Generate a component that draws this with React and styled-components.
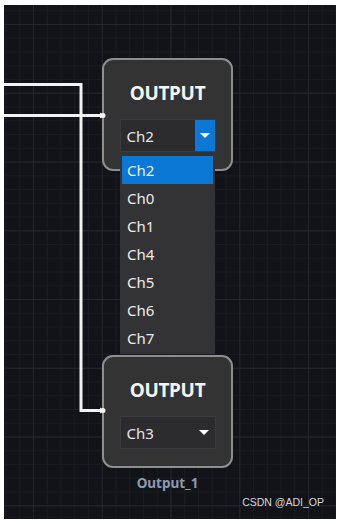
import React from "react";
import styled, { createGlobalStyle } from "styled-components";

const GlobalStyle = createGlobalStyle`
  html, body {
    margin: 0;
    padding: 0;
    background: #ffffff;
  }
  body {
    font-family: "Noto Sans", "Liberation Sans", sans-serif;
  }
`;

const Frame = styled.div`
  width: 340px;
  height: 524px;
  padding: 5px 4px 5px 4px;
  box-sizing: border-box;
`;

const Canvas = styled.div`
  position: relative;
  width: 332px;
  height: 514px;
  overflow: hidden;
  background-color: #121319;
  background-image:
    linear-gradient(to right, #24252c 1px, transparent 1px),
    linear-gradient(to bottom, #24252c 1px, transparent 1px),
    linear-gradient(to right, #1a1b21 1px, transparent 1px),
    linear-gradient(to bottom, #1a1b21 1px, transparent 1px);
  background-size: 68.75px 68.75px, 68.75px 68.75px, 13.75px 13.75px, 13.75px 13.75px;
  background-position: 29px 19px, 29px 19px, 1.5px 5.25px, 1.5px 5.25px;
`;

const Wires = styled.svg`
  position: absolute;
  left: 0;
  top: 0;
  z-index: 3;
  pointer-events: none;
`;

/* a node placed on the free canvas, with its caption under it */
const NodeGroup = styled.div`
  position: absolute;
  left: ${(p) => p.$x}px;
  top: ${(p) => p.$y}px;
  z-index: ${(p) => p.$z};
  display: flex;
  flex-direction: column;
  align-items: center;
  gap: 6px;
`;

const Node = styled.div`
  width: 131px;
  height: 113px;
  box-sizing: border-box;
  border: 2px solid #8e8e8e;
  border-radius: 11px;
  background: #333333;
  display: flex;
  flex-direction: column;
  align-items: center;
  padding-top: 20px;
`;

const Title = styled.div`
  font-weight: 700;
  font-size: 19px;
  line-height: 26px;
  color: #f4f4f4;
  letter-spacing: -0.3px;
`;

const Select = styled.div`
  margin-top: 13px;
  width: 96px;
  height: 33px;
  box-sizing: border-box;
  display: flex;
  align-items: stretch;
  background: #2c2c2f;
  border: 1px solid #3b3b3f;
`;

const Value = styled.div`
  flex: 1;
  display: flex;
  align-items: center;
  padding-left: 6px;
  font-size: 15px;
  color: #e6e6e6;
`;

const Caret = styled.div`
  width: 20px;
  display: flex;
  align-items: center;
  justify-content: center;
  margin-right: ${(p) => (p.$open ? 0 : 1)}px;
  background: ${(p) => (p.$open ? "#0a78d4" : "transparent")};

  &::after {
    content: "";
    width: 0;
    height: 0;
    border-left: 5px solid transparent;
    border-right: 5px solid transparent;
    border-top: 5px solid #ffffff;
  }
`;

const List = styled.div`
  position: absolute;
  left: 116px;
  top: 150px;
  z-index: 2;
  width: 95px;
  box-sizing: border-box;
  padding: 1px 2px 2px 2px;
  background: #333336;
  display: flex;
  flex-direction: column;
`;

const Item = styled.div`
  height: 28px;
  display: flex;
  align-items: center;
  padding-left: 5px;
  font-size: 15px;
  color: #ececec;
  background: ${(p) => (p.$active ? "#0a78d4" : "transparent")};
`;

const Label = styled.div`
  font-weight: 700;
  font-size: 13.5px;
  line-height: 18px;
  color: #8c9bb0;
`;

const Watermark = styled.div`
  position: absolute;
  right: 12px;
  bottom: 11px;
  font-family: "Liberation Sans", Arial, sans-serif;
  font-size: 10.5px;
  color: #d6d6d6;
`;

const options = ["Ch2", "Ch0", "Ch1", "Ch4", "Ch5", "Ch6", "Ch7"];

function OutputNode({ x, y, z, value, open, label }) {
  return (
    <NodeGroup $x={x} $y={y} $z={z}>
      <Node>
        <Title>OUTPUT</Title>
        <Select>
          <Value>{value}</Value>
          <Caret $open={open} />
        </Select>
      </Node>
      {label && <Label>{label}</Label>}
    </NodeGroup>
  );
}

export default function App() {
  return (
    <>
      <GlobalStyle />
      <Frame>
        <Canvas>
          <Wires width="332" height="514" viewBox="0 0 332 514">
            <g stroke="#f2f2f2" strokeWidth="3" fill="none" strokeLinejoin="miter">
              <polyline points="0,79.5 77,79.5 77,405.5 98,405.5" />
              <line x1="0" y1="110.5" x2="98" y2="110.5" />
            </g>
            <g fill="#f2f2f2">
              <path d="M96,107.5 L101,110.5 L96,113.5 Z" />
              <circle cx="99" cy="110.5" r="2.5" />
              <path d="M96,402.5 L101,405.5 L96,408.5 Z" />
              <circle cx="99" cy="405.5" r="2.5" />
            </g>
          </Wires>
          <OutputNode x={98} y={53} z={1} value="Ch2" open />
          <List>
            {options.map((o, i) => (
              <Item key={o} $active={i === 0}>{o}</Item>
            ))}
          </List>
          <OutputNode x={98} y={350} z={2} value="Ch3" label="Output_1" />
          <Watermark>CSDN @ADI_OP</Watermark>
        </Canvas>
      </Frame>
    </>
  );
}
